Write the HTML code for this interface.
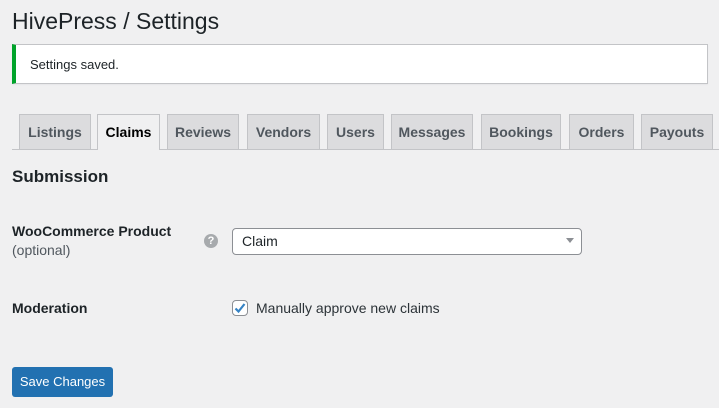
<!DOCTYPE html>
<html><head><style>
body{margin:0;width:719px;height:408px;background:#f0f0f1;font-family:"Liberation Sans",sans-serif;color:#1d2327;position:relative;overflow:hidden;font-size:13px}
.a{position:absolute}
h1{position:absolute;left:12px;top:7px;margin:0;font-size:23px;font-weight:400;line-height:29px}
.notice{left:12px;top:44px;width:691px;height:38px;background:#fff;border:1px solid #c3c4c7;border-left:4px solid #00a32a;box-shadow:0 1px 1px rgba(0,0,0,.04)}
.notice span{position:absolute;left:14px;top:12px;font-size:13px}
.line{left:12px;top:149px;width:707px;height:1px;background:#c3c4c7}
.tab{top:114px;height:34px;background:#dcdcde;border:1px solid #c3c4c7;border-bottom:none;font-size:14px;font-weight:600;color:#50575e;text-align:center;line-height:34px;box-sizing:border-box;height:35px}
.tab.act{background:#f0f0f1;color:#000;height:36px}
.sel{left:232px;top:228px;width:350px;height:27px;box-sizing:border-box;background:#fff;border:1px solid #8c8f94;border-radius:4px;font-size:14px;line-height:25px;padding-left:9px}
.btn{left:12px;top:367px;width:101px;height:30px;background:#2271b1;border-radius:3px;color:#fff;font-size:13px;text-align:center;line-height:30px}
</style></head><body>
<h1>HivePress / Settings</h1>
<div class="a notice"><span>Settings saved.</span></div>
<div class="a line"></div>
<div class="a tab" style="left:19px;width:72px">Listings</div>
<div class="a tab act" style="left:97px;width:63px">Claims</div>
<div class="a tab" style="left:167px;width:72px">Reviews</div>
<div class="a tab" style="left:247px;width:73px">Vendors</div>
<div class="a tab" style="left:327px;width:57px">Users</div>
<div class="a tab" style="left:391px;width:82px">Messages</div>
<div class="a tab" style="left:481px;width:80px">Bookings</div>
<div class="a tab" style="left:569px;width:65px">Orders</div>
<div class="a tab" style="left:641px;width:72px">Payouts</div>
<div class="a" style="left:12px;top:167px;font-size:17px;font-weight:600">Submission</div>
<div class="a" style="left:12px;top:223px;font-size:14px;font-weight:600">WooCommerce Product</div>
<div class="a" style="left:12px;top:242px;font-size:14px;color:#50575e">(optional)</div>
<div class="a" style="left:204px;top:234px;width:14px;height:14px;border-radius:50%;background:#a7aaad;color:#fff;font-size:11px;font-weight:700;text-align:center;line-height:14px">?</div>
<div class="a sel">Claim</div>
<div class="a" style="left:566px;top:238px;width:0;height:0;border-left:4px solid transparent;border-right:4px solid transparent;border-top:5px solid #8c8f94"></div>
<div class="a" style="left:12px;top:300px;font-size:14px;font-weight:600">Moderation</div>
<div class="a" style="left:232px;top:300px;width:16px;height:16px;box-sizing:border-box;border:1px solid #8c8f94;border-radius:4px;background:#fff">
<svg width="14" height="14" viewBox="0 0 14 14" style="position:absolute;left:0;top:0"><path d="M2.5 7.5 L5.5 10.5 L11.5 3" fill="none" stroke="#3582c4" stroke-width="2.2"/></svg></div>
<div class="a" style="left:256px;top:300px;font-size:14px;color:#2c3338">Manually approve new claims</div>
<div class="a btn">Save Changes</div>
</body></html>
